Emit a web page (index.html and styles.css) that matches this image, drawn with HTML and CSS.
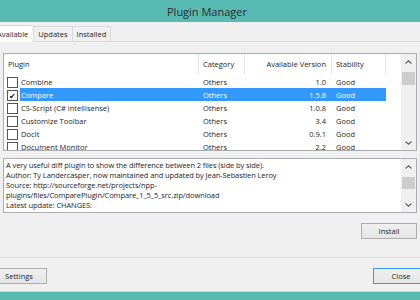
FILE: index.html
```html
<!DOCTYPE html>
<html lang="en">
<head>
    <meta charset="UTF-8">
    <title>Plugin Manager</title>
    <link rel="stylesheet" href="styles.css">
</head>
<body>
    <div class="window">
        <div class="titlebar">Plugin Manager</div>

        <!-- Tabs -->
        <div class="tabs">
            <div class="tab active">Available</div>
            <div class="tab">Updates</div>
            <div class="tab">Installed</div>
        </div>

        <div class="panel">
            <!-- Plugin list -->
            <div class="listbox">
                <div class="list">
                    <div class="row head">
                        <div class="cell c-plugin">Plugin</div>
                        <div class="cell c-cat">Category</div>
                        <div class="cell c-ver">Available Version</div>
                        <div class="cell c-stab">Stability</div>
                        <div class="cell c-fill"></div>
                    </div>
                    <div class="row">
                        <div class="check"></div>
                        <div class="cell c-name">Combine</div>
                        <div class="cell c-cat">Others</div>
                        <div class="cell c-ver">1.0</div>
                        <div class="cell c-stab">Good</div>
                    </div>
                    <div class="row selected">
                        <div class="check checked">&#10004;</div>
                        <div class="cell c-name">Compare</div>
                        <div class="cell c-cat">Others</div>
                        <div class="cell c-ver">1.5.6</div>
                        <div class="cell c-stab">Good</div>
                    </div>
                    <div class="row">
                        <div class="check"></div>
                        <div class="cell c-name">CS-Script (C# intellisense)</div>
                        <div class="cell c-cat">Others</div>
                        <div class="cell c-ver">1.0.8</div>
                        <div class="cell c-stab">Good</div>
                    </div>
                    <div class="row">
                        <div class="check"></div>
                        <div class="cell c-name">Customize Toolbar</div>
                        <div class="cell c-cat">Others</div>
                        <div class="cell c-ver">3.4</div>
                        <div class="cell c-stab">Good</div>
                    </div>
                    <div class="row">
                        <div class="check"></div>
                        <div class="cell c-name">DocIt</div>
                        <div class="cell c-cat">Others</div>
                        <div class="cell c-ver">0.9.1</div>
                        <div class="cell c-stab">Good</div>
                    </div>
                    <div class="row">
                        <div class="check"></div>
                        <div class="cell c-name">Document Monitor</div>
                        <div class="cell c-cat">Others</div>
                        <div class="cell c-ver">2.2</div>
                        <div class="cell c-stab">Good</div>
                    </div>
                </div>
                <div class="scrollbar">
                    <div class="arrow">
                        <svg width="7" height="4" viewBox="0 0 7 4"><path d="M0.5 3.5 L3.5 0.8 L6.5 3.5" fill="none" stroke="#606060" stroke-width="1.1"/></svg>
                    </div>
                    <div class="track"><div class="thumb"></div></div>
                    <div class="arrow">
                        <svg width="7" height="4" viewBox="0 0 7 4"><path d="M0.5 0.5 L3.5 3.2 L6.5 0.5" fill="none" stroke="#606060" stroke-width="1.1"/></svg>
                    </div>
                </div>
            </div>

            <!-- Description -->
            <div class="desc">
                <div class="desc-text">
                    <div>A very useful diff plugin to show the difference between 2 files (side by side).</div>
                    <div>Author: Ty Landercasper, now maintained and updated by Jean-Sebastien Leroy</div>
                    <div>Source: http://sourceforge.net/projects/npp-</div>
                    <div>plugins/files/ComparePlugin/Compare_1_5_5_src.zip/download</div>
                    <div>Latest update: CHANGES:</div>
                </div>
                <div class="scrollbar">
                    <div class="arrow">
                        <svg width="7" height="4" viewBox="0 0 7 4"><path d="M0.5 3.5 L3.5 0.8 L6.5 3.5" fill="none" stroke="#606060" stroke-width="1.1"/></svg>
                    </div>
                    <div class="track"><div class="thumb"></div></div>
                    <div class="arrow">
                        <svg width="7" height="4" viewBox="0 0 7 4"><path d="M0.5 0.5 L3.5 3.2 L6.5 0.5" fill="none" stroke="#606060" stroke-width="1.1"/></svg>
                    </div>
                </div>
            </div>

            <div class="actions">
                <button class="btn">Install</button>
            </div>
        </div>

        <div class="footer">
            <button class="btn">Settings</button>
            <button class="btn default">Close</button>
        </div>
        <div class="frame-bottom"></div>
    </div>
</body>
</html>
```

FILE: styles.css
```css
body {
    margin: 0;
    width: 420px;
    height: 300px;
    overflow: hidden;
    background-color: #f0f0f0;
    font-family: "Open Sans", "Noto Sans", sans-serif;
    font-size: 7.5px;
    color: #1e1e1e;
}

.window {
    width: 438px;
    margin-left: -9px;
    height: 300px;
    display: flex;
    flex-direction: column;
    background-color: #f0f0f0;
}

/* Title bar */
.titlebar {
    height: 22px;
    background-color: #59bab3;
    color: #2a2a2a;
    font-size: 11px;
    display: flex;
    justify-content: center;
    align-items: center;
    padding-right: 6px;
}

/* Tabs */
.tabs {
    display: flex;
    align-items: flex-end;
    padding-left: 1px;
    border-bottom: 1px solid #d9d9d9;
    box-sizing: border-box;
    height: 20px;
}

.tab {
    height: 14px;
    padding: 0 4px;
    border: 1px solid #d9d9d9;
    border-bottom: none;
    background-color: #f0f0f0;
    display: flex;
    align-items: center;
    margin-right: -1px;
}

.tab.active {
    height: 16px;
    background-color: #fff;
    position: relative;
    z-index: 1;
    margin-bottom: -1px;
    padding: 0 5px 0 4px;
}

/* Panel */
.panel {
    flex: 1;
    padding: 11px 12px 0;
    border-bottom: 1px solid #dcdcdc;
    display: flex;
    flex-direction: column;
}

.listbox {
    height: 96px;
    border: 1px solid #abadb3;
    background-color: #fff;
    display: flex;
    overflow: hidden;
}

.list {
    flex: 1;
    overflow: hidden;
}

.row {
    display: grid;
    grid-template-columns: 16px 179px 46px 87px 54px;
    height: 13px;
    align-items: stretch;
}

.row.head {
    grid-template-columns: 195px 46px 87px 54px 1fr;
    height: 20px;
    margin-bottom: 1px;
}

.cell {
    display: flex;
    align-items: center;
    padding: 0 4px;
    white-space: nowrap;
    overflow: hidden;
}

.head .cell {
    border-right: 1px solid #e5e5e5;
}

.head .c-fill {
    border-right: none;
}

.c-name {
    padding-left: 1px;
}

.c-ver {
    justify-content: flex-end;
}

.row .c-ver {
    padding-right: 6px;
}

.head .c-ver {
    padding-right: 5px;
}

.check {
    width: 9px;
    height: 9px;
    border: 1px solid #555;
    margin: 1px 0 0 3px;
    align-self: center;
    background-color: #fff;
    font-size: 8px;
    line-height: 9px;
    text-align: center;
    color: #111;
}

.selected .cell {
    background-color: #3399ff;
    color: #fff;
}

/* Scrollbars */
.scrollbar {
    width: 15px;
    background-color: #f0f0f0;
    display: flex;
    flex-direction: column;
}

.arrow {
    height: 15px;
    display: flex;
    justify-content: center;
    align-items: center;
}

.track {
    flex: 1;
    padding: 3px 1px 0;
}

.thumb {
    height: 13px;
    background-color: #cdcdcd;
}

/* Description */
.desc {
    margin-top: 7px;
    height: 53px;
    border: 1px solid #abadb3;
    background-color: #fff;
    display: flex;
}

.desc-text {
    flex: 1;
    padding: 1px 2px;
    line-height: 10px;
    white-space: nowrap;
    overflow: hidden;
    letter-spacing: -0.1px;
}

.desc .thumb {
    height: 12px;
}

.actions {
    display: flex;
    justify-content: flex-end;
    margin-top: 10px;
}

/* Buttons */
.btn {
    width: 56px;
    height: 16px;
    padding: 0;
    font-family: inherit;
    font-size: 7.5px;
    color: #1e1e1e;
    border: 1px solid #adadad;
    background: linear-gradient(#f0f0f0, #e5e5e5);
    cursor: pointer;
}

.btn.default {
    border-color: #3399ff;
}

.footer {
    height: 33px;
    display: flex;
    justify-content: space-between;
    align-items: flex-start;
    padding-top: 10px;
    box-sizing: border-box;
}

.frame-bottom {
    height: 8px;
    background-color: #59bab3;
    border-top: 1px solid #b8dedb;
}
```
